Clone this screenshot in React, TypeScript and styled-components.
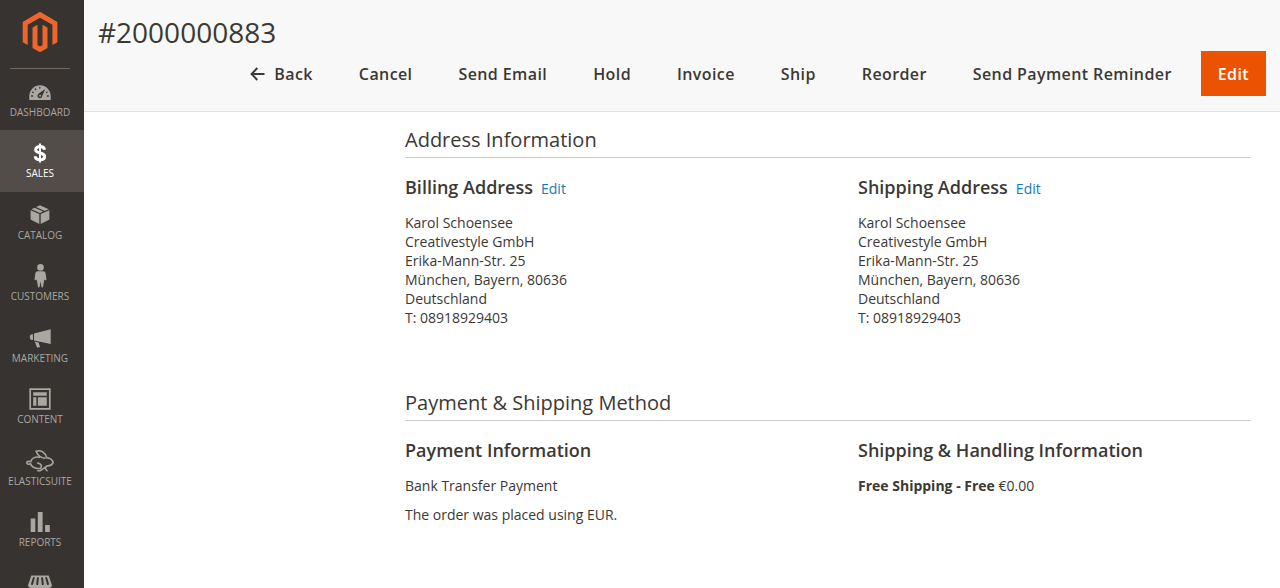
import React from "react";
import styled, { createGlobalStyle } from "styled-components";

const GlobalStyle = createGlobalStyle`
  * { box-sizing: border-box; }
  html, body, #root { height: 100%; }
  body {
    margin: 0;
    background: #fff;
    color: #3c3834;
    font-family: "Open Sans", "Noto Sans", sans-serif;
    font-size: 14px;
    line-height: 19px;
  }
`;

const Page = styled.div`
  display: flex;
  height: 100%;
  overflow: hidden;
`;

const Sidebar = styled.nav`
  flex: 0 0 84px;
  background: #373330;
  overflow: hidden;
`;

const LogoLink = styled.a`
  display: flex;
  justify-content: center;
  margin: 0 14px 0 10px;
  padding: 11px 0 15px;
  border-bottom: 1px solid #736963;
`;

const Menu = styled.ul`
  list-style: none;
  margin: 0;
  padding: 0;
`;

const MenuItem = styled.li`
  height: 61px;
  &:nth-child(even) { height: 62px; }
`;

const MenuLink = styled.a<{ $active?: boolean }>`
  display: flex;
  flex-direction: column;
  align-items: center;
  height: 100%;
  padding: 11px 4px 0 0;
  background: ${(p) => (p.$active ? "#524d49" : "transparent")};
  color: ${(p) => (p.$active ? "#fff" : "#aaa6a0")};
  font-size: 10px;
  line-height: 14px;
  text-decoration: none;
  text-transform: uppercase;
  white-space: nowrap;
  svg { display: block; margin-bottom: 1px; }
`;

const Main = styled.main`
  flex: 1;
  min-width: 0;
`;

const Header = styled.header`
  padding: 14px 14px 15px;
  background: #f8f8f8;
  border-bottom: 1px solid #e3e3e3;
`;

const Title = styled.h1`
  margin: 0;
  font-size: 28px;
  line-height: 37px;
  font-weight: 400;
`;

const Actions = styled.div`
  display: flex;
  justify-content: flex-end;
  gap: 12px;
`;

const Button = styled.button<{ $primary?: boolean }>`
  display: flex;
  align-items: center;
  gap: 9px;
  height: 45px;
  padding: 0 16px;
  border: 1px solid ${(p) => (p.$primary ? "#eb5202" : "transparent")};
  background: ${(p) => (p.$primary ? "#eb5202" : "transparent")};
  color: ${(p) => (p.$primary ? "#fff" : "#3c3834")};
  font-family: inherit;
  font-size: 16px;
  font-weight: 600;
  letter-spacing: 0.025em;
  white-space: nowrap;
`;

const Content = styled.div`
  padding: 16px 29px 0 321px;
`;

const Section = styled.section`
  & + & { margin-top: 64px; }
`;

const SectionTitle = styled.h2`
  margin: 0 0 17px;
  padding-bottom: 6px;
  border-bottom: 1px solid #ccc;
  font-size: 20px;
  line-height: 23px;
  font-weight: 400;
`;

const Columns = styled.div`
  display: grid;
  grid-template-columns: 1fr 1fr;
  column-gap: 60px;
`;

const BlockTitle = styled.div`
  display: flex;
  align-items: baseline;
  gap: 8px;
  margin-bottom: 13px;
`;

const BlockHeading = styled.h3`
  margin: 0;
  font-size: 18px;
  line-height: 25px;
  font-weight: 600;
`;

const EditLink = styled.a`
  color: #1979b8;
  text-decoration: none;
`;

const Address = styled.address`
  font-style: normal;
`;

const Text = styled.p`
  margin: 0 0 10px;
  strong { font-weight: 700; }
`;

const icons: Record<string, React.ReactNode> = {
  Dashboard: (
    <svg width="24" height="24" viewBox="0 0 24 24">
      <path d="M1.3 20v-4a10.7 10.7 0 0 1 21.4 0v4z" fill="#aaa6a0" />
      <path d="M3.6 16h1M4.6 12.2l.6.3M7.3 9l.4.5M11.800 7.400v.6M19.300 16h1M19 12.200l-.5.3" stroke="#373330" strokeWidth="1.300" strokeLinecap="round" />
      <path d="M17.200 9l-2.900 6.800a2.400 2.400 0 1 1-3.400-2.200z" fill="#373330" />
      <circle cx="12.100" cy="15.700" r="1" fill="#aaa6a0" />
    </svg>
  ),
  Sales: (
    <svg width="24" height="24" viewBox="0 0 24 24" fill="none" stroke="#fff">
      <path d="M16.600 8.800C16.200 6.700 14.500 5.600 12 5.600c-2.600 0-4.400 1.200-4.400 3.200 0 4.300 9 2.100 9 6.600 0 2.100-1.900 3.300-4.600 3.300-2.700 0-4.500-1.200-4.900-3.500" strokeWidth="3" />
      <path d="M12 2.600v19" strokeWidth="2" />
    </svg>
  ),
  Catalog: (
    <svg width="24" height="24" viewBox="0 0 24 24" fill="#aaa6a0">
      <path d="M2.600 7.300l8.700 3.700v9.900l-8.700-4.300zM21.400 7.300L12.700 11v9.900l8.700-4.300z" />
      <path d="M3.400 6.200l3.200-1.400 8.500 3.800-3.100 1.300zM8 4.100l4-1.900 8.700 4-4 1.700z" />
    </svg>
  ),
  Customers: (
    <svg width="24" height="24" viewBox="0 0 24 24" fill="#aaa6a0">
      <circle cx="12.500" cy="3.400" r="3.300" />
      <path d="M9.800 7.200h5.400c1.600 0 2.300 1 2.500 2.500l.7 5.500c.1 1-.9 1.300-1.600.6h-.5l-1.300 7c-.2 1.100-1.400 1.100-1.600 0l-.9-5.300-.9 5.300c-.2 1.100-1.400 1.100-1.600 0l-1.300-7h-.5c-.7.700-1.700.4-1.600-.6l.7-5.500c.2-1.500.9-2.500 2.500-2.500z" />
    </svg>
  ),
  Marketing: (
    <svg width="24" height="24" viewBox="0 0 24 24" fill="#aaa6a0">
      <path d="M6 7.500L22.700 3.300v14.600L6 14.500zM5 8.200v5.900l-2.200-.4-.9-1.400V9.800l1-1.200zM6.800 15.600l3.800.8 1.500 4.500-3 .8z" />
    </svg>
  ),
  Content: (
    <svg width="24" height="24" viewBox="0 0 24 24">
      <path d="M2.200 2.200h19.600v19.600H2.200z" fill="none" stroke="#aaa6a0" strokeWidth="1.700" />
      <path d="M5.200 5.200h13.600v3.600H5.200zM5.200 10.300h3.200v8.500H5.200zM9.900 10.300h8.900v8.500H9.900z" fill="#aaa6a0" />
    </svg>
  ),
  Elasticsuite: (
    <svg width="30" height="24" viewBox="0 0 30 24" fill="none" stroke="#aaa6a0" strokeWidth="1.600" strokeLinecap="round" strokeLinejoin="round">
      <path d="M20 9.200C16.200 8.900 12.800 6.300 11 2.200c5-1.700 9.200 1.300 10.800 6.500 3.600.4 5.800 2.300 6.400 4.700-1 2.500-3.300 3.400-6.200 3.600l-2.200 1.600 2.200 3" />
      <path d="M14.500 8.200c-4.500-.7-8 1.300-8.700 4.600-2.300-1-4.500-.2-4 1.300.5 1.400 2.500 1.300 3.800.7.800 2.500 3.200 4.200 6.400 4.700h3.500c1.700-1.800 1.300-4.700-2.800-5.500" />
      <path d="M12.800 21.800h2.200l4.800-3.200" />
    </svg>
  ),
  Reports: (
    <svg width="24" height="24" viewBox="0 0 24 24" fill="#aaa6a0">
      <path d="M2.700 8.500h4.600V22H2.700zM9.800 2h4.800v20H9.800zM17.100 15h4.700v7h-4.700z" />
    </svg>
  ),
  Stores: (
    <svg width="26" height="24" viewBox="0 0 26 24" fill="#aaa6a0">
      <path d="M4.300 3.500h17.400l3.300 9.700c0 1.500-1 2.300-2.300 2.300V23H3.300v-7.500C2 15.500 1 14.700 1 13.200z" />
      <path d="M7 5.300L4.800 12.800M11 5.300l-.9 7.500M15 5.300l.9 7.500M19 5.300l2.200 7.500" stroke="#373330" strokeWidth="2" />
    </svg>
  ),
};

const MagentoLogo = () => (
  <svg width="36" height="42" viewBox="0 0 36 42" fill="#ee662c" role="img" aria-label="Magento">
    <path d="M18 .8L35.400 10.900v20.300l-5 2.900V13.800L18 6.700 5.700 13.800v20.300l-5-2.900V10.900z" />
    <path d="M10.500 16.600l5-2.900v20.400l2.500 1.500 2.500-1.500V13.700l5 2.900v20.400L18 41.300 10.500 37z" />
  </svg>
);

const BackArrow = () => (
  <svg width="15" height="14" viewBox="0 0 15 14" fill="none" stroke="currentColor" strokeWidth="2" aria-hidden="true">
    <path d="M7.300 1L1.600 7l5.700 6M1.800 7H14.500" />
  </svg>
);

const menuItems = [
  { name: "Dashboard" },
  { name: "Sales" },
  { name: "Catalog" },
  { name: "Customers" },
  { name: "Marketing" },
  { name: "Content" },
  { name: "Elasticsuite" },
  { name: "Reports" },
  { name: "Stores", iconOnly: true },
];

const actions = ["Cancel", "Send Email", "Hold", "Invoice", "Ship", "Reorder", "Send Payment Reminder"];

const customerAddress = [
  "Karol Schoensee",
  "Creativestyle GmbH",
  "Erika-Mann-Str. 25",
  "München, Bayern, 80636",
  "Deutschland",
  "T: 08918929403",
];

const AddressBlock = ({ title }: { title: string }) => (
  <div>
    <BlockTitle>
      <BlockHeading>{title}</BlockHeading>
      <EditLink href="#">Edit</EditLink>
    </BlockTitle>
    <Address>
      {customerAddress.map((line) => (
        <div key={line}>{line}</div>
      ))}
    </Address>
  </div>
);

export default function App() {
  return (
    <Page>
      <GlobalStyle />
      <Sidebar>
        <LogoLink href="#">
          <MagentoLogo />
        </LogoLink>
        <Menu>
          {menuItems.map(({ name, iconOnly }) => (
            <MenuItem key={name}>
              <MenuLink href="#" $active={name === "Sales"} aria-label={name}>
                {icons[name]}
                {!iconOnly && name}
              </MenuLink>
            </MenuItem>
          ))}
        </Menu>
      </Sidebar>
      <Main>
        <Header>
          <Title>#2000000883</Title>
          <Actions>
            <Button type="button">
              <BackArrow />
              Back
            </Button>
            {actions.map((label) => (
              <Button type="button" key={label}>{label}</Button>
            ))}
            <Button type="button" $primary>Edit</Button>
          </Actions>
        </Header>
        <Content>
          <Section>
            <SectionTitle>Address Information</SectionTitle>
            <Columns>
              <AddressBlock title="Billing Address" />
              <AddressBlock title="Shipping Address" />
            </Columns>
          </Section>
          <Section>
            <SectionTitle>Payment &amp; Shipping Method</SectionTitle>
            <Columns>
              <div>
                <BlockTitle>
                  <BlockHeading>Payment Information</BlockHeading>
                </BlockTitle>
                <Text>Bank Transfer Payment</Text>
                <Text>The order was placed using EUR.</Text>
              </div>
              <div>
                <BlockTitle>
                  <BlockHeading>Shipping &amp; Handling Information</BlockHeading>
                </BlockTitle>
                <Text><strong>Free Shipping - Free</strong> €0.00</Text>
              </div>
            </Columns>
          </Section>
        </Content>
      </Main>
    </Page>
  );
}
